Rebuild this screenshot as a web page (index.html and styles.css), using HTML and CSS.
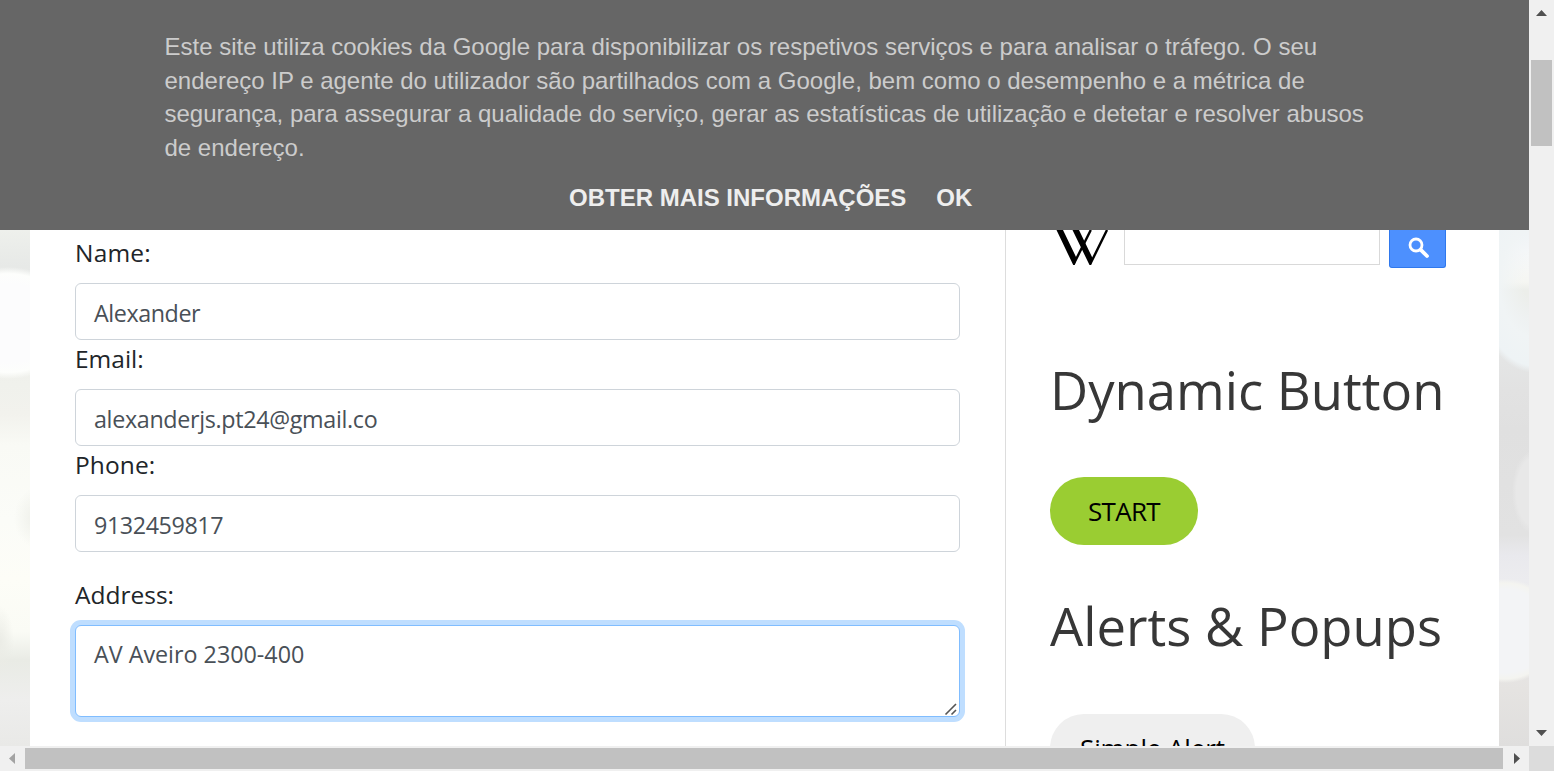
FILE: index.html
```html
<!DOCTYPE html>
<html lang="pt">
<head>
<meta charset="utf-8">
<title>Automation Testing Practice</title>
<link rel="stylesheet" href="styles.css">
</head>
<body>
<div class="window">
  <div class="viewport">
    <div class="cookie-bar">
      <p class="cookie-text">Este site utiliza cookies da Google para disponibilizar os respetivos serviços e para analisar o tráfego. O seu<br>endereço IP e agente do utilizador são partilhados com a Google, bem como o desempenho e a métrica de<br>segurança, para assegurar a qualidade do serviço, gerar as estatísticas de utilização e detetar e resolver abusos<br>de endereço.</p>
      <div class="cookie-actions"><a>OBTER MAIS INFORMAÇÕES</a><a>OK</a></div>
    </div>
    <div class="page">
      <div class="bokeh bokeh-left"></div>
      <main class="main">
        <div class="group"><label class="l-name">Name:</label><div class="field"><span class="v-name">Alexander</span></div></div>
        <div class="group"><label>Email:</label><div class="field"><span class="v-email">alexanderjs.pt24@gmail.co</span></div></div>
        <div class="group phone"><label class="l-phone">Phone:</label><div class="field"><span class="v-phone">9132459817</span></div></div>
        <div class="group"><label>Address:</label><div class="field area"><span>AV Aveiro 2300-400</span>
          <svg class="grip" width="14" height="14" viewBox="0 0 14 14"><path d="M1.5 12.500 12 2M7.500 12.500 12 8" stroke="#555" stroke-width="1.6" fill="none"/></svg></div></div>
      </main>
      <aside class="side">
        <div class="wiki">
          <svg class="logo" width="54" height="36" viewBox="0 0 54 36"><path d="M0.500 0H7L20.500 28 18.800 35H17.200ZM16.500 0H23L36.500 28 35.300 35H33.500Z"/><path d="M18 33.500 34.800 0M34.500 33.500 51 0" stroke="#000" stroke-width="2.400"/></svg>
          <div class="wiki-input"></div>
          <div class="wiki-button"><svg width="22" height="22" viewBox="0 0 22 22"><circle cx="8" cy="8" r="6" fill="none" stroke="#fff" stroke-width="2.800"/><path d="M12.800 12.800 19 19" stroke="#fff" stroke-width="3.800" stroke-linecap="round"/></svg></div>
        </div>
        <h2 class="h-dyn">Dynamic Button</h2>
        <div class="pill start"><span>START</span></div>
        <h2 class="h-alerts">Alerts &amp; Popups</h2>
        <div class="pill alert"><span>Simple Alert</span></div>
      </aside>
      <div class="bokeh bokeh-right"></div>
    </div>
  </div>
  <div class="vbar">
    <svg width="25" height="746" viewBox="0 0 25 746"><path d="M7 16 12.500 10 18 16ZM7 730h11l-5.500 6Z" fill="#505050"/><path d="M2 60h21v86H2Z" fill="#c1c1c1"/></svg>
  </div>
  <div class="hbar">
    <svg width="1529" height="25" viewBox="0 0 1529 25"><path d="M15 7v11L9 12.500Z" fill="#a3a3a3"/><path d="M1514 7v11l6-5.500Z" fill="#505050"/><path d="M25 2h1478v21H25Z" fill="#c1c1c1"/></svg>
  </div>
  <div class="corner"></div>
</div>
</body>
</html>
```
FILE: styles.css
```css
* { box-sizing: border-box; }
body { margin: 0; background: #fff; font-family: "Open Sans", "Noto Sans", sans-serif; overflow: hidden; }
svg { display: block; }
.window { display: grid; grid-template: 746px 25px / 1529px 25px; width: 1554px; height: 771px; }
.viewport { display: flex; flex-direction: column; overflow: hidden; }
.vbar, .hbar { background: #f0f0f0; }
.corner { background: #dcdcdc; }

.cookie-bar { flex: 0 0 230px; background: #666; padding: 30px 0 0; font-family: "Liberation Sans", Arial, sans-serif; font-size: 24px; }
.cookie-text { margin: 0 0 0 164.5px; line-height: 33.6px; color: #ccc; white-space: nowrap; }
.cookie-actions { display: flex; gap: 30px; margin: 17px 0 0 569px; line-height: 33px; font-weight: 700; color: #eee; white-space: nowrap; }

.page { flex: 0 0 516px; display: flex; overflow: hidden; }
.bokeh { flex: 0 0 30px; }
.bokeh-left {
  background:
    radial-gradient(ellipse 70px 56px at 8px 93px, #fcfcfd 0 70%, #fdfefc 88%, transparent 100%),
    radial-gradient(ellipse 22px 30px at 36px 288px, #eeefe9 0, transparent 100%),
    radial-gradient(ellipse 14px 36px at 0 412px, #ebece6 0, transparent 100%),
    linear-gradient(#eef0ec 0, #e7e9e7 36px, #f0f1ec 155px, #f2f2ed 184px, #f9faf5 215px, #fbfcf8 290px, #fdfdf7 350px, #fafbf5 402px, #e9ebe5 430px, #eeeeed 470px, #e9e9e7 516px);
}
.bokeh-right {
  background:
    radial-gradient(ellipse 22px 42px at 35px 262px, #e8e8e8 0 80%, transparent 100%),
    radial-gradient(ellipse 55px 52px at 6px 401px, #f3f4f6 0 80%, #f4f4f0 92%, transparent 100%),
    radial-gradient(ellipse 60px 90px at 36px 53px, transparent 0 20%, #f0f4f5 60%, #eef3f5 92%, transparent 100%),
    linear-gradient(#f1f4fa 0, #f7f8fa 20px, #f5f6f2 52px, #eceeea 60px, #eceeed 90px, #e4e5e5 130px, #e2e2e2 160px, #e0e0e0 200px, #e2e2e2 305px, #e9e9ed 325px, #ececef 350px, #e5e3e1 460px, #dfdedd 516px);
}

.main { flex: 0 0 976px; padding: 5px 45px 0; border-right: 1px solid #ddd; white-space: nowrap; }
.group { height: 106px; }
.phone { height: 130px; }
.group label { display: block; height: 36px; margin-bottom: 12px; line-height: 36px; font-size: 24.5px; color: #212529; }
.group .l-name { letter-spacing: 0.2px; }
.group .l-phone { letter-spacing: 0.1px; }
.field { height: 57px; padding: 11px 18px 0; border: 1px solid #ced4da; border-radius: 6px; font-size: 23.3px; line-height: 36px; color: #495057; background: #fff; }
.v-name { letter-spacing: -0.42px; }
.v-email { letter-spacing: -0.33px; }
.v-phone { letter-spacing: -0.4px; }
.area { position: relative; height: 92px; padding-top: 10px; border-color: #80bdff; box-shadow: 0 0 0 5px #bfdeff; }
.grip { position: absolute; right: 1px; bottom: 0; }

.side { flex: 0 0 493px; padding-left: 44px; white-space: nowrap; }
.wiki { display: flex; height: 38px; padding-left: 6px; }
.logo { margin-right: 14px; }
.wiki-input { width: 256px; height: 35px; border: 1px solid #d9d9d9; border-top: 0; margin-right: 9px; }
.wiki-button { width: 57px; height: 38px; padding: 7px 0 0 18px; background: #4d90fe; border: 1px solid #2f78ed; border-top: 0; border-radius: 0 0 3px 3px; }
.side h2 { margin: 0; height: 74px; line-height: 74px; font-size: 52.6px; font-weight: 400; color: #373737; }
.side .h-dyn { margin: 85px 0 50px; }
.side .h-alerts { margin: 44px 0 51px; }
.pill { display: flex; justify-content: center; height: 68px; border-radius: 34px; line-height: 68px; font-size: 26px; color: #000; }
.start { width: 148px; background: #9acd32; letter-spacing: -0.7px; }
.alert { width: 205px; background: #efefef; letter-spacing: -0.1px; }
```
